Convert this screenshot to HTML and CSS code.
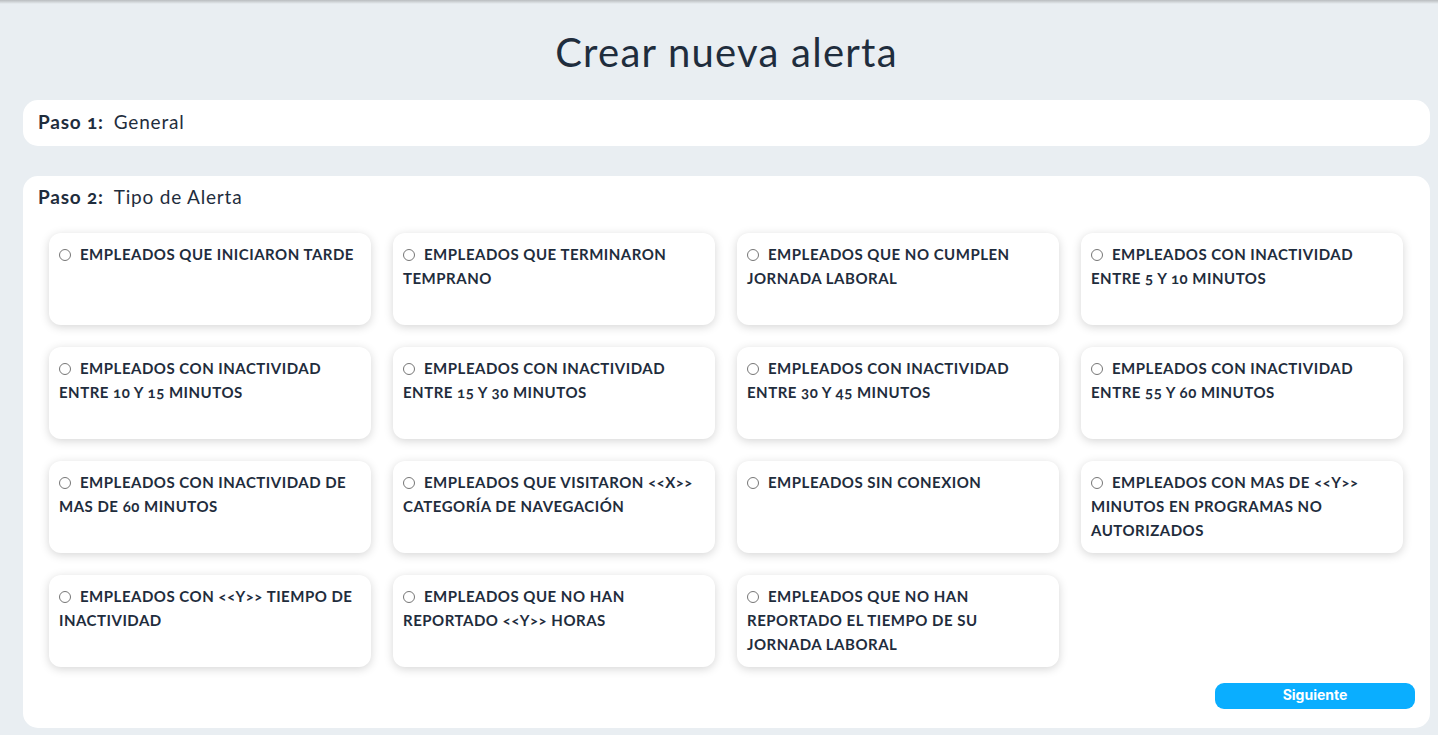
FILE: index.html
```html
<!DOCTYPE html>
<html lang="es">
<head>
<meta charset="utf-8">
<title>Crear nueva alerta</title>
<link rel="stylesheet" href="styles.css">
</head>
<body>
<div class="topbar"></div>
<main class="page">
  <h1 class="title">Crear nueva alerta</h1>
  <section class="step step-1">
    <div class="step-head"><span class="step-label">Paso 1:</span><span class="step-name">General</span></div>
  </section>
  <section class="step step-2">
    <div class="step-head"><span class="step-label">Paso 2:</span><span class="step-name">Tipo de Alerta</span></div>
    <div class="options">
      <label class="option"><span class="radio"></span>EMPLEADOS QUE INICIARON TARDE</label>
      <label class="option"><span class="radio"></span>EMPLEADOS QUE TERMINARON TEMPRANO</label>
      <label class="option"><span class="radio"></span>EMPLEADOS QUE NO CUMPLEN JORNADA LABORAL</label>
      <label class="option"><span class="radio"></span>EMPLEADOS CON INACTIVIDAD ENTRE 5 Y 10 MINUTOS</label>
      <label class="option"><span class="radio"></span>EMPLEADOS CON INACTIVIDAD ENTRE 10 Y 15 MINUTOS</label>
      <label class="option"><span class="radio"></span>EMPLEADOS CON INACTIVIDAD ENTRE 15 Y 30 MINUTOS</label>
      <label class="option"><span class="radio"></span>EMPLEADOS CON INACTIVIDAD ENTRE 30 Y 45 MINUTOS</label>
      <label class="option"><span class="radio"></span>EMPLEADOS CON INACTIVIDAD ENTRE 55 Y 60 MINUTOS</label>
      <label class="option"><span class="radio"></span>EMPLEADOS CON INACTIVIDAD DE MAS DE 60 MINUTOS</label>
      <label class="option"><span class="radio"></span>EMPLEADOS QUE VISITARON &lt;&lt;X&gt;&gt; CATEGORÍA DE NAVEGACIÓN</label>
      <label class="option"><span class="radio"></span>EMPLEADOS SIN CONEXION</label>
      <label class="option"><span class="radio"></span>EMPLEADOS CON MAS DE &lt;&lt;Y&gt;&gt; MINUTOS EN PROGRAMAS NO AUTORIZADOS</label>
      <label class="option"><span class="radio"></span>EMPLEADOS CON &lt;&lt;Y&gt;&gt; TIEMPO DE INACTIVIDAD</label>
      <label class="option"><span class="radio"></span>EMPLEADOS QUE NO HAN REPORTADO &lt;&lt;Y&gt;&gt; HORAS</label>
      <label class="option"><span class="radio"></span>EMPLEADOS QUE NO HAN REPORTADO EL TIEMPO DE SU JORNADA LABORAL</label>
    </div>
    <div class="actions">
      <button class="btn-next" type="button">Siguiente</button>
    </div>
  </section>
</main>
</body>
</html>
```

FILE: styles.css
```css
* { box-sizing: border-box; }
html, body { margin: 0; padding: 0; }
body {
  background: #e9eef2;
  font-family: Lato, "Noto Sans", sans-serif;
  color: #1f2d3d;
  width: 1438px;
  height: 735px;
  overflow: hidden;
  font-variant-numeric: oldstyle-nums;
}
.topbar {
  height: 4px;
  background: linear-gradient(#b9bcbf, #e9eef2);
}
.page {
  padding: 0 8px 0 23px;
}
.title {
  margin: 0;
  height: 96px;
  padding-top: 24px;
  text-align: center;
  font-size: 40px;
  line-height: 48px;
  font-weight: 400;
  letter-spacing: 1.25px;
  color: #1f2d3d;
}
.step {
  background: #fff;
  border-radius: 15px;
}
.step-1 {
  height: 46px;
  padding: 9px 15px;
}
.step-2 {
  margin-top: 30px;
  height: 552px;
  padding: 8px 15px 0 15px;
}
.step-head {
  font-size: 19px;
  line-height: 25px;
  letter-spacing: 0.8px;
  display: flex;
  align-items: baseline;
}
.step-label { font-weight: 700; margin-right: 10px; }
.step-name { font-weight: 400; }
.options {
  margin-top: 24px;
  padding: 0 11px;
  display: grid;
  grid-template-columns: repeat(4, 322px);
  grid-auto-rows: 92px;
  column-gap: 22px;
  row-gap: 22px;
}
.option {
  background: #fff;
  border-radius: 12px;
  box-shadow: 0 2px 10px rgba(0,0,0,0.17);
  padding: 9px 10px;
  font-size: 15px;
  line-height: 24px;
  font-weight: 700;
  letter-spacing: 0.5px;
  color: #1f2d3d;
}
.radio {
  display: inline-block;
  width: 12px;
  height: 12px;
  border: 1px solid #767676;
  border-radius: 50%;
  margin-right: 9px;
  vertical-align: -1px;
  background: #fff;
}
.actions {
  display: flex;
  justify-content: flex-end;
  padding-top: 16px;
}
.btn-next {
  width: 200px;
  height: 26px;
  border: none;
  border-radius: 9px;
  background: #0aaeff;
  color: #fff;
  font-family: Inter, "Noto Sans", sans-serif;
  font-weight: 700;
  font-size: 14px;
  line-height: 24px;
  padding: 0 0 2px;
}
```
